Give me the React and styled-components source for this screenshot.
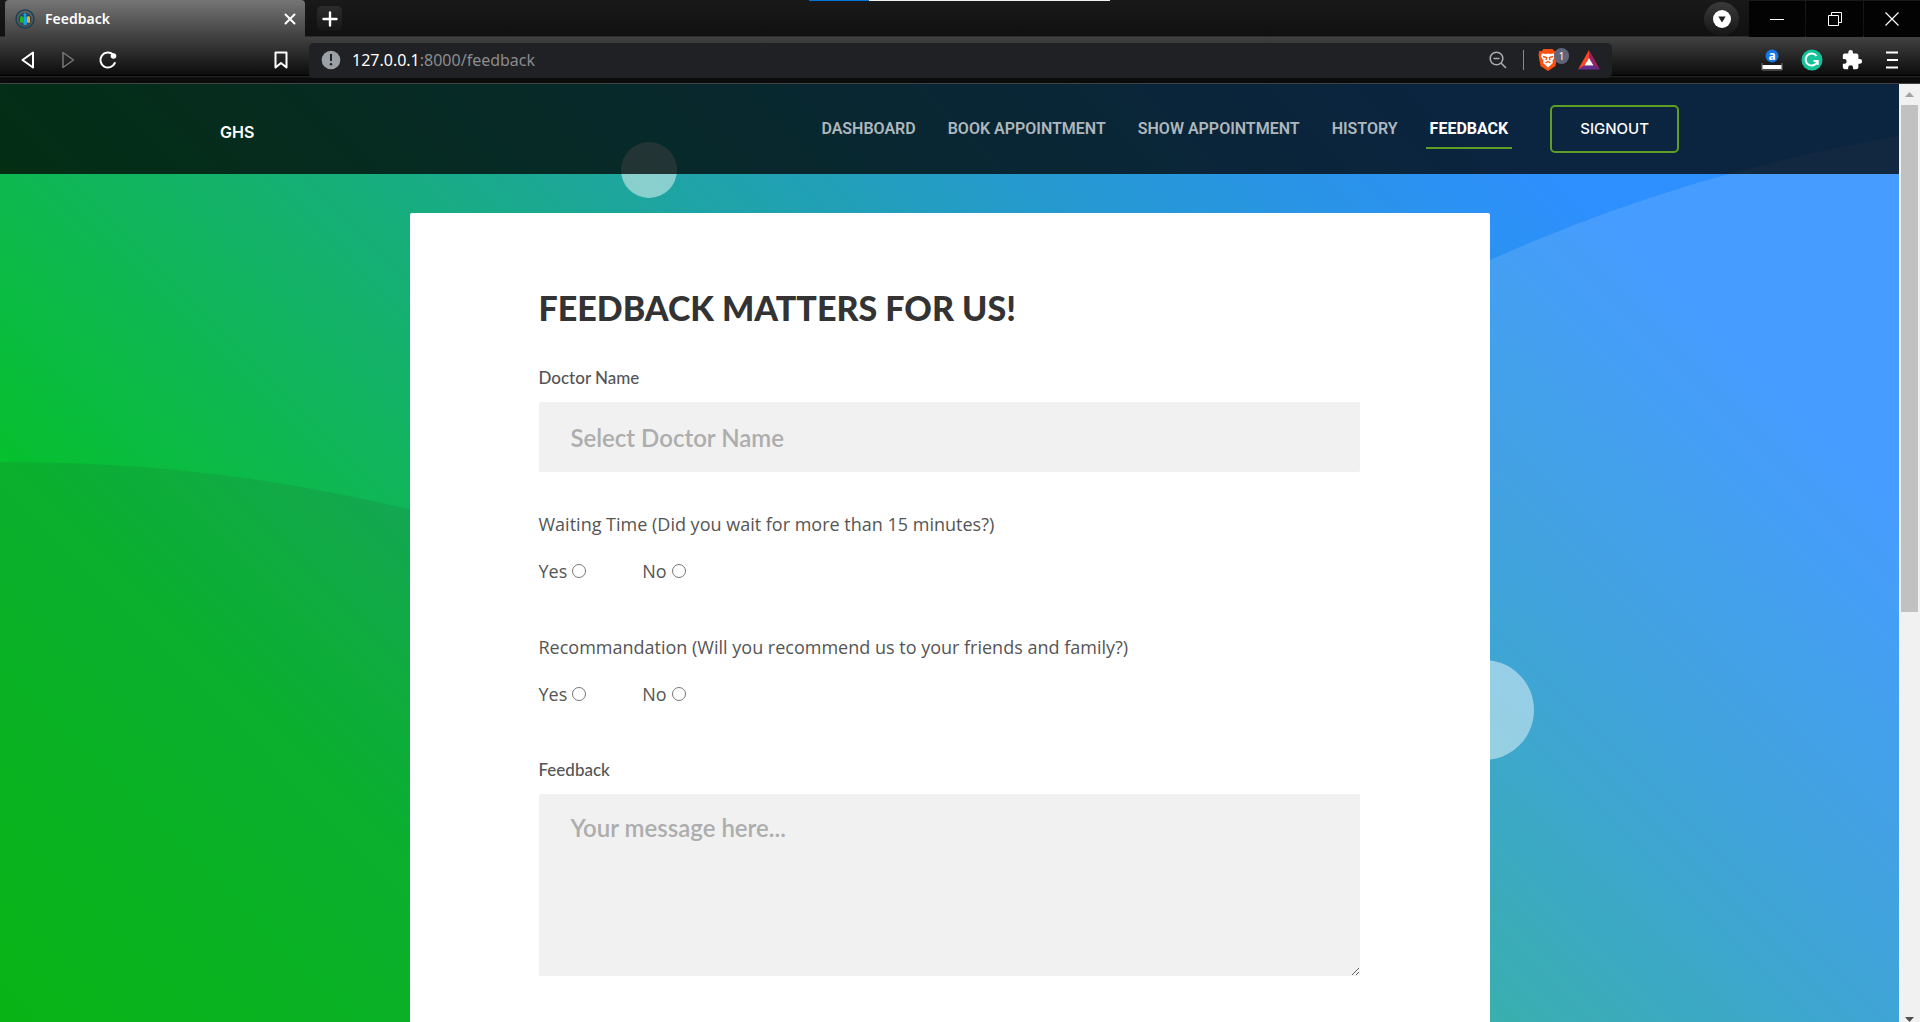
import React from 'react';
import styled, { createGlobalStyle, css } from 'styled-components';

const GlobalStyle = createGlobalStyle`
  *, *::before, *::after { box-sizing: border-box; }
  html, body { margin: 0; padding: 0; }
  body { background: #0d0d0d; overflow: hidden; }
  button { font: inherit; color: inherit; background: none; border: 0; padding: 0; cursor: pointer; }
`;

const heading = `Lato, "Open Sans", sans-serif`;
const ui = `"Noto Sans", "Open Sans", sans-serif`;

const Window = styled.div`
  height: 100vh;
  display: flex;
  flex-direction: column;
`;

/* ---------- browser chrome ---------- */

const TabStrip = styled.div`
  position: relative;
  display: flex;
  height: 37px;
  padding-left: 5px;
  background: linear-gradient(#191919, #101010);
  box-shadow: inset 0 -1px #2c2c2c;
  font-family: ${ui};
`;

const Progress = styled.div`
  position: absolute;
  top: 0;
  left: 809px;
  width: 301px;
  height: 1px;
  background: linear-gradient(90deg, #0074d9 60px, #f0f0f0 60px);
`;

const Tab = styled.div`
  display: flex;
  align-items: center;
  gap: 10px;
  width: 300px;
  padding: 0 9px 0 10px;
  border-radius: 4px 4px 0 0;
  background: linear-gradient(#757575, #404040);
  color: #fff;
  font-size: 14px;
  font-weight: 600;
  line-height: 20px;
`;

const TabTitle = styled.span`
  flex: 1;
`;

const IconButton = styled.button`
  display: grid;
  place-items: center;
  width: ${(p) => p.$w || 24}px;
  height: ${(p) => p.$h || 24}px;
  svg { display: block; }
`;

const NewTab = styled(IconButton)`
  align-self: center;
  margin-left: 12px;
  border-radius: 5px;
  background: linear-gradient(#2c2c2c, #161616);
`;

const WindowControls = styled.div`
  display: flex;
  align-items: center;
  gap: 1px;
  margin-left: auto;
`;

const Round = styled(IconButton)`
  margin-right: 9px;
  border-radius: 50%;
  background: linear-gradient(#3a3a3a, #151515);
`;

const WindowButton = styled(IconButton)`
  background: #030303;
`;

const Toolbar = styled.div`
  display: flex;
  align-items: center;
  height: 47px;
  padding-bottom: 1px;
  background: linear-gradient(#414141, #0c0c0c 38px, #000 38px, #000 39px, #2a2a2a 39px, #0b0b0b 41px, #0b0b0b 46px, #444 46px);
`;

const NavButtons = styled.div`
  display: flex;
  align-items: center;
  justify-content: space-between;
  width: 309px;
  padding: 0 16px;
`;

const NavGroup = styled.div`
  display: flex;
  gap: 16px;
`;

const Address = styled.div`
  display: flex;
  align-items: center;
  flex: 1;
  height: 35px;
  padding: 0 4px 0 12px;
  border-radius: 5px;
  background: #202124;
`;

const Url = styled.span`
  flex: 1;
  margin-left: 11px;
  font: 16px/24px ${ui};
  color: #8b8c8e;
  b { color: #fff; font-weight: 400; }
`;

const Divider = styled.span`
  width: 1px;
  height: 20px;
  margin: 0 12px 0 16px;
  background: #8a8a8a;
`;

const Shield = styled(IconButton)`
  position: relative;
  margin-right: 10px;
`;

const Badge = styled.span`
  position: absolute;
  left: 18px;
  top: 0;
  width: 15px;
  height: 16px;
  border-radius: 8px;
  background: #61657a;
  color: #fff;
  font: 10px/16px ${ui};
  text-align: center;
`;

const Extensions = styled.div`
  display: flex;
  align-items: center;
  justify-content: flex-end;
  gap: 16px;
  width: 308px;
  padding-right: 16px;
`;

/* ---------- page ---------- */

const Viewport = styled.div`
  display: flex;
  flex: 1;
  min-height: 0;
`;

const Page = styled.div`
  position: relative;
  flex: 1;
  overflow: hidden;
  background: linear-gradient(45deg, #03c411, #06c02e 20%, #0eb850 30%, #17ad7e 43%, #1fa3a8 54%, #2599cf 66%, #2e8fff 85%);
`;

const Backdrop = styled.svg`
  position: absolute;
  inset: 0;
`;

const Header = styled.header`
  position: relative;
  display: flex;
  align-items: center;
  justify-content: space-between;
  height: 90px;
  padding: 0 220px;
  background: rgba(0, 0, 0, 0.75);
`;

const Brand = styled.a`
  padding-top: 6px;
  color: #fff;
  font: 600 16px/24px Inter, sans-serif;
  text-decoration: none;
`;

const Menu = styled.nav`
  display: flex;
  align-items: center;
  gap: 24px;
`;

const MenuLink = styled.a`
  padding: 8px 4px 6px;
  border-bottom: 2px solid ${(p) => (p.$active ? '#5f9e25' : 'transparent')};
  color: ${(p) => (p.$active ? '#fff' : '#aeb7bd')};
  font: ${(p) => (p.$active ? 700 : 600)} 16px/24px Roboto, sans-serif;
  text-decoration: none;
  text-transform: uppercase;
`;

const SignOut = styled.button`
  && {
    height: 48px;
    margin-left: 14px;
    padding: 0 28px;
    border: 2px solid #5f9e25;
    border-radius: 5px;
    color: #fff;
    font: 500 15px/24px Inter, sans-serif;
  }
`;

const Card = styled.main`
  position: relative;
  width: calc(100% - 40px);
  max-width: 1080px;
  margin: 39px auto;
  padding: 73px 130px 128px 129px;
  border-radius: 2px;
  background: #fff;
`;

const Title = styled.h1`
  margin: 0 0 32px;
  color: #333;
  font: 900 34px/44px "Lato Black", ${heading};
  text-transform: uppercase;
`;

const Field = styled.div`
  display: flex;
  flex-direction: column;
  gap: 8px;
  margin-bottom: 36px;
`;

const Label = styled.label`
  color: #555;
  font: 500 17px/32px "Lato Medium", ${heading};
`;

const control = css`
  width: 100%;
  border: 0;
  border-radius: 2px;
  background: #f1f1f1;
  color: #555;
  font: 600 24px/28px ${heading};
  outline: none;
  &::placeholder { color: #adadad; opacity: 1; }
`;

const TextInput = styled.input`
  ${control}
  height: 70px;
  padding: 0 32px;
`;

const Message = styled.textarea`
  ${control}
  display: block;
  height: 182px;
  padding: 20px 32px;
  resize: vertical;
`;

const Question = styled.fieldset`
  margin: 0 0 44px;
  padding: 0;
  border: 0;
  color: #555;
  font: 400 18px/32px "Open Sans", sans-serif;
`;

const Legend = styled.legend`
  padding: 0;
  margin-bottom: 15px;
`;

const Choices = styled.div`
  display: flex;
  gap: 56px;
`;

const Choice = styled.label`
  display: flex;
  align-items: center;
  gap: 5px;
`;

const Radio = styled.input`
  width: 14px;
  height: 14px;
  margin: 0;
`;

const ScrollTrack = styled.div`
  display: flex;
  flex-direction: column;
  align-items: center;
  width: 21px;
  background: #f1f1f1;
`;

const ScrollArrow = styled.span`
  display: grid;
  place-items: ${(p) => (p.$end ? 'end center' : 'center')};
  flex: none;
  width: 21px;
  height: 21px;
`;

const ScrollThumb = styled.div`
  width: 17px;
  height: 507px;
  margin-bottom: auto;
  background: #c1c1c1;
`;

const stroke = { fill: 'none', stroke: '#fff', strokeWidth: 2, strokeLinejoin: 'round', strokeLinecap: 'round' };

function Chrome() {
  return (
    <>
      <TabStrip>
        <Progress />
        <Tab>
          <svg width="20" height="20" viewBox="0 0 20 20">
            <circle cx="10" cy="10" r="9" fill="none" stroke="#1d3f57" strokeWidth="1.5" />
            <circle cx="10" cy="10" r="6.5" fill="#24475c" />
            <rect x="5" y="7" width="3" height="7" rx="1.5" fill="#27b31f" />
            <rect x="12" y="7" width="3" height="7" rx="1.5" fill="#f5a623" />
            <rect x="8.3" y="7" width="3.6" height="9" rx="1.5" fill="#11a7f0" />
            <circle cx="10" cy="5.5" r="1.5" fill="#11a7f0" />
          </svg>
          <TabTitle>Feedback</TabTitle>
          <IconButton aria-label="Close tab" $w={12}>
            <svg width="12" height="12" viewBox="0 0 12 12"><path d="M1.5 1.5l9 9M10.5 1.5l-9 9" {...stroke} /></svg>
          </IconButton>
        </Tab>
        <NewTab aria-label="New tab" $w={25} $h={25}>
          <svg width="16" height="16" viewBox="0 0 16 16"><path d="M8 1.5v13M1.5 8h13" {...stroke} strokeWidth="2.4" /></svg>
        </NewTab>
        <WindowControls>
          <Round aria-label="Search tabs" $w={35} $h={34}>
            <svg width="18" height="18" viewBox="0 0 18 18"><circle cx="9" cy="9" r="9" fill="#fff" /><path d="M5.3 6.5h7.4L9 12.5z" fill="#222" /></svg>
          </Round>
          <WindowButton aria-label="Minimize" $w={56} $h={36}>
            <svg width="14" height="14"><path d="M0 7.5h14" stroke="#fff" /></svg>
          </WindowButton>
          <WindowButton aria-label="Restore" $w={57} $h={36}>
            <svg width="14" height="14" fill="none" stroke="#fff"><path d="M.5 3.5h10v10H.5zM3.5 3.5v-3h10v10h-3" /></svg>
          </WindowButton>
          <WindowButton aria-label="Close" $w={56} $h={36}>
            <svg width="14" height="14"><path d="M.5.5l13 13M13.5.5l-13 13" stroke="#fff" strokeWidth="1.2" /></svg>
          </WindowButton>
        </WindowControls>
      </TabStrip>
      <Toolbar>
        <NavButtons>
          <NavGroup>
            <IconButton aria-label="Back"><svg width="24" height="24"><path d="M17 4.5v15L6.5 12z" {...stroke} /></svg></IconButton>
            <IconButton aria-label="Forward"><svg width="24" height="24"><path d="M7 4.5v15L17.5 12z" {...stroke} stroke="#777" strokeWidth="1.5" /></svg></IconButton>
            <IconButton aria-label="Reload">
              <svg width="24" height="24"><path d="M18.8 15A7.5 7.5 0 1 1 17 6.5" {...stroke} /><circle cx="17.5" cy="8" r="2.8" fill="#fff" /></svg>
            </IconButton>
          </NavGroup>
          <IconButton aria-label="Bookmark"><svg width="24" height="24"><path d="M6.5 4.5h11v15L12 15l-5.5 4.5z" {...stroke} /></svg></IconButton>
        </NavButtons>
        <Address>
          <svg width="20" height="20"><circle cx="10" cy="10" r="9.3" fill="#9aa0a6" /><path d="M10 4v7" stroke="#202124" strokeWidth="2" /><circle cx="10" cy="14.3" r="1.2" fill="#202124" /></svg>
          <Url><b>127.0.0.1</b>:8000/feedback</Url>
          <IconButton aria-label="Zoom" $w={18}>
            <svg width="18" height="18" fill="none" stroke="#a9abae" strokeWidth="1.6"><circle cx="7.5" cy="7.5" r="6.3" /><path d="M12 12l5 5M4.5 7.5h6" /></svg>
          </IconButton>
          <Divider />
          <Shield aria-label="Shields" $w={24}>
            <svg width="20" height="24" viewBox="0 0 20 24">
              <path d="M5.5 1h9l2 2.2 2.3-.4.7 4.2-2 11L10 23l-7.5-5L.5 7l.8-4.2 2.2.4z" fill="#fb5010" />
              <path d="M4 5.5l4 .6 2-.6 2 .6 4-.6 1.2 3-2.7 4 .3 2.5-4.8 4.5-4.8-4.5.3-2.5-2.7-4z" fill="#fff" />
              <path d="M5 8.5l3.5 1L8 12M15 8.5l-3.5 1 .5 2.5M7.5 15l2.5-1.5 2.5 1.5" fill="none" stroke="#fb5010" strokeWidth="1.4" />
            </svg>
            <Badge>1</Badge>
          </Shield>
          <IconButton aria-label="Rewards" $w={38}>
            <svg width="24" height="22" viewBox="0 0 24 22"><path d="M12 1L1 20.5l6.5-4L12 9z" fill="#ff4724" /><path d="M12 1l11 19.5-6.5-4L12 9z" fill="#9e1f63" /><path d="M1 20.5h22l-6.5-4h-9z" fill="#662d91" /><path d="M12 9l4.5 7.5h-9z" fill="#fff" /></svg>
          </IconButton>
        </Address>
        <Extensions>
          <IconButton aria-label="Amazon assistant">
            <svg width="24" height="24" viewBox="0 0 24 24"><circle cx="12" cy="8" r="6.5" fill="#1676e8" /><text x="12" y="12" fill="#fff" fontSize="12" fontWeight="700" fontFamily="Open Sans, sans-serif" textAnchor="middle">a</text><path d="M2 15v7h20v-7" stroke="#777" fill="none" /><path d="M2.5 17h19v4h-19z" fill="#fff" /></svg>
          </IconButton>
          <IconButton aria-label="Grammarly">
            <svg width="22" height="22" viewBox="0 0 22 22"><circle cx="11" cy="11" r="10.5" fill="#15c39a" /><path d="M15.5 7A6 6 0 1 0 16.5 12H12.5M16.7 11.5v4.5" fill="none" stroke="#fff" strokeWidth="2" /></svg>
          </IconButton>
          <IconButton aria-label="Extensions">
            <svg width="22" height="22" viewBox="0 0 24 24"><path fill="#fff" d="M20.5 11H19V7a2 2 0 0 0-2-2h-4V3.5a2.5 2.5 0 0 0-5 0V5H4a2 2 0 0 0-2 2v3.8h1.5a2.7 2.7 0 0 1 0 5.4H2V20a2 2 0 0 0 2 2h3.8v-1.5a2.7 2.7 0 0 1 5.4 0V22H17a2 2 0 0 0 2-2v-4h1.5a2.5 2.5 0 0 0 0-5z" /></svg>
          </IconButton>
          <IconButton aria-label="Menu">
            <svg width="12" height="18"><path d="M0 1.5h12M1 9h11M0 16.5h12" stroke="#fff" strokeWidth="2" /></svg>
          </IconButton>
        </Extensions>
      </Toolbar>
    </>
  );
}

const links = ['Dashboard', 'Book Appointment', 'Show Appointment', 'History', 'Feedback'];

function YesNo({ name, children }) {
  return (
    <Question>
      <Legend>{children}</Legend>
      <Choices>
        {['Yes', 'No'].map((answer) => (
          <Choice key={answer}>
            {answer}
            <Radio type="radio" name={name} value={answer} />
          </Choice>
        ))}
      </Choices>
    </Question>
  );
}

export default function App() {
  return (
    <Window>
      <GlobalStyle />
      <Chrome />
      <Viewport>
        <Page>
          <Backdrop width="100%" height="100%" viewBox="0 0 1899 938" preserveAspectRatio="xMidYMin slice" aria-hidden="true">
            <circle cx="2176" cy="1702" r="1673" fill="#fff" fillOpacity="0.12" />
            <circle cx="10" cy="2090" r="1712" fill="#275530" fillOpacity="0.15" />
            <circle cx="649" cy="86" r="28" fill="#fff" fillOpacity="0.48" />
            <circle cx="1484" cy="626" r="50" fill="#fff" fillOpacity="0.46" />
          </Backdrop>
          <Header>
            <Brand href="#home">GHS</Brand>
            <Menu>
              {links.map((text) => (
                <MenuLink key={text} href={'#' + text.toLowerCase().replace(' ', '-')} $active={text === 'Feedback'}>
                  {text}
                </MenuLink>
              ))}
              <SignOut type="button">SIGNOUT</SignOut>
            </Menu>
          </Header>
          <Card>
            <Title>Feedback matters for us!</Title>
            <form>
              <Field>
                <Label htmlFor="doctor">Doctor Name</Label>
                <TextInput id="doctor" placeholder="Select Doctor Name" />
              </Field>
              <YesNo name="waiting">Waiting Time (Did you wait for more than 15 minutes?)</YesNo>
              <YesNo name="recommend">Recommandation (Will you recommend us to your friends and family?)</YesNo>
              <Field>
                <Label htmlFor="message">Feedback</Label>
                <Message id="message" placeholder="Your message here..." />
              </Field>
            </form>
          </Card>
        </Page>
        <ScrollTrack>
          <ScrollArrow><svg width="9" height="5"><path d="M0 5l4.5-5L9 5z" fill="#a3a3a3" /></svg></ScrollArrow>
          <ScrollThumb />
          <ScrollArrow $end><svg width="9" height="5"><path d="M0 0h9L4.5 5z" fill="#505050" /></svg></ScrollArrow>
        </ScrollTrack>
      </Viewport>
    </Window>
  );
}
